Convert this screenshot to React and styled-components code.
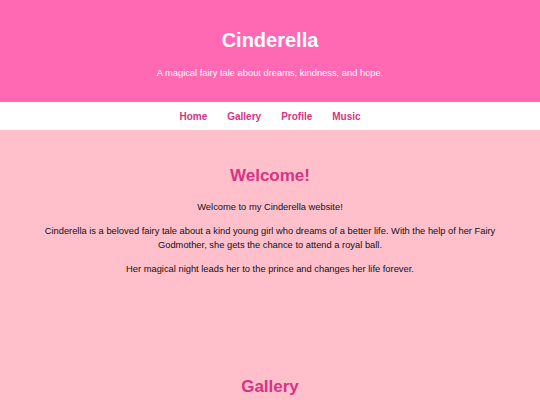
import React from 'react';
import styled, { createGlobalStyle } from 'styled-components';

const GlobalStyle = createGlobalStyle`
  body {
    margin: 0;
    background-color: #ffc0cb;
    font-family: "Liberation Sans", Arial, sans-serif;
  }
`;

const Header = styled.header`
  background-color: #ff69b4;
  color: white;
  text-align: center;
  height: 102px;
  padding-top: 28px;
  box-sizing: border-box;
`;

const Title = styled.h1`
  margin: 0;
  font-size: 20px;
  line-height: 24px;
`;

const Tagline = styled.p`
  margin: 15px 0 0;
  font-size: 9.33px;
  line-height: 12px;
`;

const Nav = styled.nav`
  background-color: white;
  height: 28px;
  display: flex;
  justify-content: center;
  align-items: center;
  gap: 20px;
`;

const NavLink = styled.a`
  color: #d63384;
  font-size: 10px;
  font-weight: 700;
  text-decoration: none;
`;

const Section = styled.section`
  text-align: center;
  padding: 36px 40px 0;
  min-height: ${props => props.minHeight || 0}px;
  box-sizing: border-box;
`;

const Heading = styled.h2`
  margin: 0 0 14px;
  color: #d63384;
  font-size: 17px;
  line-height: 20px;
`;

const Text = styled.p`
  margin: 0 0 10px;
  font-size: 9.33px;
  line-height: 14px;
  color: #111;
`;

function App() {
  return (
    <>
      <GlobalStyle />
      <Header>
        <Title>Cinderella</Title>
        <Tagline>A magical fairy tale about dreams, kindness, and hope.</Tagline>
      </Header>
      <Nav>
        <NavLink href="#home">Home</NavLink>
        <NavLink href="#gallery">Gallery</NavLink>
        <NavLink href="#profile">Profile</NavLink>
        <NavLink href="#music">Music</NavLink>
      </Nav>
      <Section id="home" minHeight={211}>
        <Heading>Welcome!</Heading>
        <Text>Welcome to my Cinderella website!</Text>
        <Text>
          Cinderella is a beloved fairy tale about a kind young girl who dreams of a better life.
          With the help of her Fairy Godmother, she gets the chance to attend a royal ball.
        </Text>
        <Text>Her magical night leads her to the prince and changes her life forever.</Text>
      </Section>
      <Section id="gallery">
        <Heading>Gallery</Heading>
      </Section>
    </>
  );
}

export default App;
